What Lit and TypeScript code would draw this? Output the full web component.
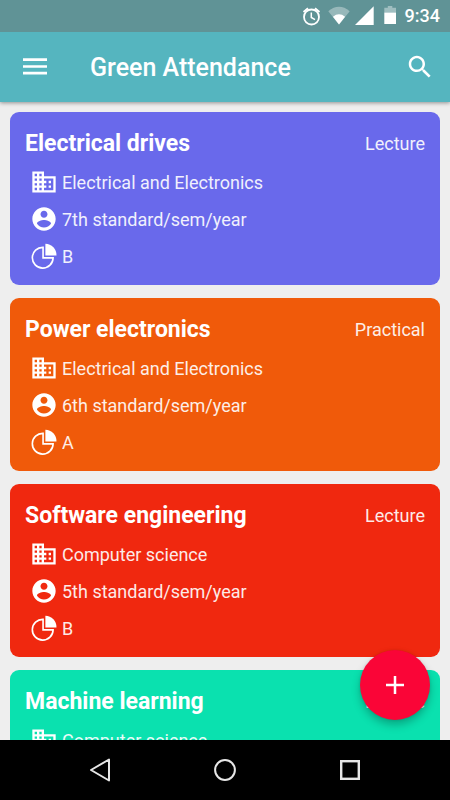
import { LitElement, html, css, svg } from "lit";
import { customElement, property } from "lit/decorators.js";

interface ClassInfo {
  name: string;
  kind: string;
  department: string;
  year: string;
  section: string;
  color: string;
}

const classes: ClassInfo[] = [
  { name: "Electrical drives", kind: "Lecture", department: "Electrical and Electronics", year: "7th standard/sem/year", section: "B", color: "#6969eb" },
  { name: "Power electronics", kind: "Practical", department: "Electrical and Electronics", year: "6th standard/sem/year", section: "A", color: "#f05a0a" },
  { name: "Software engineering", kind: "Lecture", department: "Computer science", year: "5th standard/sem/year", section: "B", color: "#f0280f" },
  { name: "Machine learning", kind: "Lecture", department: "Computer science", year: "5th standard/sem/year", section: "A", color: "#0ae1af" },
];

const business = svg`<path fill="currentColor" d="M12 7V3H2v18h20V7H12zM6 19H4v-2h2v2zm0-4H4v-2h2v2zm0-4H4V9h2v2zm0-4H4V5h2v2zm4 12H8v-2h2v2zm0-4H8v-2h2v2zm0-4H8V9h2v2zm0-4H8V5h2v2zm10 12h-8v-2h2v-2h-2v-2h2v-2h-2V9h8v10zm-2-8h-2v2h2v-2zm0 4h-2v2h2v-2z"/>`;
const account = svg`<path fill="currentColor" d="M12 2C6.48 2 2 6.48 2 12s4.480 10 10 10 10-4.480 10-10S17.520 2 12 2zm0 3c1.660 0 3 1.340 3 3s-1.340 3-3 3-3-1.340-3-3 1.340-3 3-3zm0 14.200c-2.500 0-4.710-1.280-6-3.220.030-1.990 4-3.080 6-3.080 1.990 0 5.970 1.090 6 3.080-1.290 1.940-3.500 3.220-6 3.220z"/>`;
const pie = svg`<path fill="none" stroke="currentColor" stroke-width="1.400" d="M11.200 4.600A8.900 8.900 0 1 0 19.800 13.600H11.200z"/><path fill="currentColor" d="M13.200 1.500A9.800 9.800 0 0 1 22.700 11.500H13.200z"/>`;

@customElement("class-card")
export class ClassCard extends LitElement {
  static styles = css`
    :host { display: block; }
    .card {
      box-sizing: border-box;
      padding: 12px 15px 15px;
      border-radius: 9px;
      color: #fff;
    }
    .head {
      display: flex;
      align-items: center;
      justify-content: space-between;
      height: 40px;
      margin-bottom: 4px;
    }
    .name { margin: 0; font-size: 23px; line-height: 28px; font-weight: 700; }
    .kind { font-size: 18px; line-height: 28px; opacity: 0.9; }
    .facts {
      display: flex;
      flex-direction: column;
      gap: 9px;
      list-style: none;
      margin: 0;
      padding: 0 0 0 5px;
    }
    .fact {
      display: flex;
      align-items: center;
      gap: 4px;
      height: 28px;
      font-size: 18px;
      line-height: 28px;
    }
    .icon { width: 28px; height: 28px; flex: none; }
    .text { opacity: 0.9; padding-top: 2px; }
  `;

  @property({ attribute: false }) info!: ClassInfo;

  private fact(icon: unknown, text: string) {
    return html`<li class="fact">
      <svg class="icon" viewBox="0 0 24 24" aria-hidden="true">${icon}</svg>
      <span class="text">${text}</span>
    </li>`;
  }

  render() {
    const c = this.info;
    return html`<article class="card" style="background:${c.color}">
      <div class="head"><h2 class="name">${c.name}</h2><span class="kind">${c.kind}</span></div>
      <ul class="facts">
        ${this.fact(business, c.department)}
        ${this.fact(account, c.year)}
        ${this.fact(pie, c.section)}
      </ul>
    </article>`;
  }
}

@customElement("app-root")
export class AppRoot extends LitElement {
  static styles = css`
    :host {
      display: flex;
      flex-direction: column;
      height: 100vh;
      background: #eee;
      font-family: Roboto, "Liberation Sans", sans-serif;
      color: #fff;
    }
    button {
      display: flex;
      align-items: center;
      justify-content: center;
      padding: 0;
      border: 0;
      background: none;
      color: inherit;
      cursor: pointer;
    }
    svg { display: block; }
    .status {
      flex: none;
      position: relative;
      z-index: 2;
      display: flex;
      align-items: center;
      justify-content: flex-end;
      height: 32px;
      padding-right: 10px;
      background: #609396;
    }
    .time { font-size: 18px; line-height: 32px; font-weight: 500; margin-left: 8px; }
    .bar {
      flex: none;
      position: relative;
      z-index: 1;
      display: flex;
      align-items: center;
      height: 70px;
      padding: 0 15px 0 20px;
      box-sizing: border-box;
      background: #55b5bf;
      box-shadow: 0 1px 4px rgba(0, 0, 0, 0.4);
    }
    .tool { width: 30px; height: 30px; }
    .title { flex: 1; margin: 0 0 0 40px; font-size: 25px; line-height: 32px; padding-top: 2px; font-weight: 500; }
    .content { flex: 1; min-height: 0; position: relative; overflow: hidden; }
    .list {
      box-sizing: border-box;
      height: 100%;
      overflow-y: auto;
      scrollbar-width: none;
      display: flex;
      flex-direction: column;
      gap: 13px;
      padding: 10px;
    }
    .item { flex: none; }
    .fab {
      position: absolute;
      right: 20px;
      bottom: 20px;
      width: 70px;
      height: 70px;
      border-radius: 50%;
      background: #fa0537;
      box-shadow: 0 5px 8px rgba(0, 0, 0, 0.25), 0 0 3px rgba(0, 0, 0, 0.1);
    }
    .nav {
      flex: none;
      display: flex;
      align-items: center;
      justify-content: center;
      gap: 95px;
      height: 60px;
      background: #000;
      color: #e6e6e6;
    }
    .key { width: 30px; height: 30px; }
  `;

  render() {
    return html`
      <div class="status">
        <svg width="101" height="32" viewBox="0 0 101 32" aria-hidden="true">
          <g fill="none" stroke="#fff" stroke-width="1.800">
            <circle cx="15.500" cy="17" r="7.500" />
            <path d="M7.500 12l4.500-3.800M23.500 12l-4.500-3.800" />
            <path stroke-width="1.500" d="M15.300 12.500v5l3.700 2.200" />
          </g>
          <path fill="#fff" fill-opacity="0.350" d="M32.300 11.200Q43 2.500 53.700 11.200L43 24.500z" />
          <path fill="#fff" d="M36.900 16.700Q43 12 49.100 16.700L43 24.500z" />
          <path fill="#fff" d="M59 25H77.700V6.300z" />
          <path fill="#fff" fill-opacity="0.400" d="M88.300 7.700h3.500V6h4.500v1.700h3.700v4.800H88.300z" />
          <path fill="#fff" d="M88.300 12.500h11.700V24H88.300z" />
        </svg>
        <span class="time">9:34</span>
      </div>
      <header class="bar">
        <button class="tool" aria-label="Menu">
          <svg width="30" height="30" viewBox="0 0 30 30"><path fill="none" stroke="currentColor" stroke-width="2.700" d="M3 7.700h24M3 14.500h24M3 21.100h24" /></svg>
        </button>
        <h1 class="title">Green Attendance</h1>
        <button class="tool" aria-label="Search">
          <svg width="30" height="30" viewBox="0 0 24 24"><path fill="currentColor" d="M15.500 14h-.790l-.280-.270C15.410 12.590 16 11.110 16 9.500 16 5.910 13.090 3 9.500 3S3 5.910 3 9.500 5.910 16 9.500 16c1.610 0 3.090-.590 4.230-1.570l.270.280v.790l5 4.990L20.490 19l-4.990-5zm-6 0C7.010 14 5 11.990 5 9.500S7.010 5 9.500 5 14 7.010 14 9.500 11.990 14 9.500 14z" /></svg>
        </button>
      </header>
      <main class="content">
        <div class="list">
          ${classes.map((c) => html`<class-card class="item" .info=${c}></class-card>`)}
        </div>
        <button class="fab" aria-label="Add class">
          <svg width="30" height="30" viewBox="0 0 30 30"><path fill="none" stroke="#fff" stroke-width="2.500" d="M15 6v18M6 15h18" /></svg>
        </button>
      </main>
      <nav class="nav">
        <button class="key" aria-label="Back">
          <svg width="30" height="30" viewBox="0 0 30 30"><path fill="none" stroke="currentColor" stroke-width="2" stroke-linejoin="round" d="M24 4.500v21L6 15z" /></svg>
        </button>
        <button class="key" aria-label="Home">
          <svg width="30" height="30" viewBox="0 0 30 30"><circle cx="15" cy="15" r="9.900" fill="none" stroke="currentColor" stroke-width="2" /></svg>
        </button>
        <button class="key" aria-label="Recent apps">
          <svg width="30" height="30" viewBox="0 0 30 30"><rect x="6.200" y="6.200" width="17.600" height="17.600" fill="none" stroke="currentColor" stroke-width="2.400" /></svg>
        </button>
      </nav>
    `;
  }
}
